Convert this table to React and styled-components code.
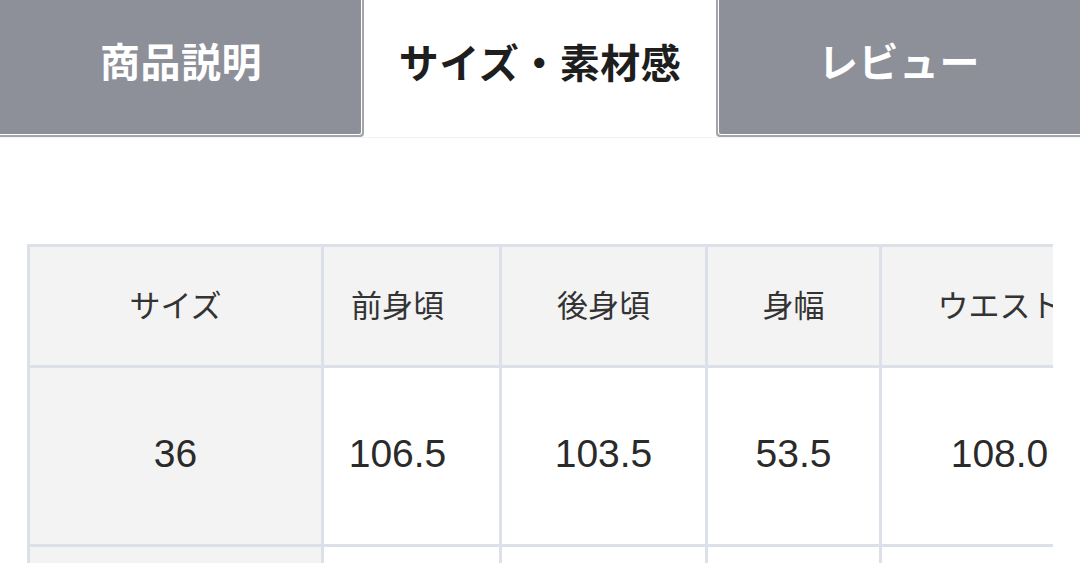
import React from "react";
import styled, { createGlobalStyle } from "styled-components";

const Global = createGlobalStyle`
  html, body { margin: 0; padding: 0; background: #ffffff; }
  body {
    font-family: "Liberation Sans", "Noto Sans CJK JP", sans-serif;
    color: #222;
    overflow: hidden;
  }
`;

const Page = styled.div`
  width: 1080px;
  height: 563px;
  overflow: hidden;
  background: #fff;
`;

const TabBar = styled.nav`
  display: grid;
  grid-template-columns: 364px 1fr 364px;
  height: 137px;
  border-bottom: 1px solid #f3f3f3;
  box-sizing: content-box;
`;

const Tab = styled.div`
  display: flex;
  align-items: center;
  justify-content: center;
  box-sizing: border-box;
  padding-bottom: 16px;
  font-family: "Noto Sans CJK JP", sans-serif;
  font-weight: 700;
  font-size: 40px;
  letter-spacing: 0.5px;
  color: ${(p) => (p.$active ? "#1e1e1e" : "#ffffff")};
  background: ${(p) => (p.$active ? "#ffffff" : "#8e9099")};
  border-bottom: ${(p) => (p.$active ? "none" : "2px solid #a3a5ab")};
  border-right: ${(p) => (p.$side === "left" ? "2px solid #a3a5ab" : "none")};
  border-left: ${(p) => (p.$side === "right" ? "2px solid #a3a5ab" : "none")};
  border-bottom-right-radius: ${(p) => (p.$side === "left" ? "4px" : "0")};
  border-bottom-left-radius: ${(p) => (p.$side === "right" ? "4px" : "0")};
  box-shadow: ${(p) =>
    p.$side === "left"
      ? "inset -1px -1px 0 #ffffff"
      : p.$side === "right"
      ? "inset 1px -1px 0 #ffffff"
      : "none"};
`;

const TableWrap = styled.div`
  margin: 106px 27px 0;
  overflow: hidden;
`;

const Table = styled.table`
  border-collapse: collapse;
  table-layout: fixed;
  width: 1090px;
  color: #333;
`;

const HeadCell = styled.th`
  height: 113px;
  background: #f3f3f3;
  border: 3px solid #dce1e9;
  font-weight: 400;
  font-size: 31px;
  font-family: "Noto Sans CJK JP", sans-serif;
  text-align: center;
  white-space: nowrap;
  padding: 0 ${(p) => p.$shift || 0}px 5px 0;
  overflow: hidden;
`;

const RowHead = styled.th`
  height: 172px;
  background: #f3f3f3;
  border: 3px solid #dce1e9;
  font-weight: 400;
  font-size: 39px;
  font-family: "Liberation Sans", sans-serif;
  color: #2a2a2a;
  text-align: center;
  padding: 0 0 4px 0;
`;

const Cell = styled.td`
  height: 172px;
  background: #ffffff;
  border: 3px solid #dce1e9;
  font-size: 39px;
  color: #2a2a2a;
  text-align: center;
  white-space: nowrap;
  padding: 0 ${(p) => p.$shift || 0}px 4px 0;
`;

const widths = [294, 178, 206, 174, 238];
const shifts = [0, 28, 0, 0, 0];
const headers = ["サイズ", "前身頃", "後身頃", "身幅", "ウエスト"];
const rows = [
  ["36", "106.5", "103.5", "53.5", "108.0"],
  ["", "", "", "", ""],
];

export default function App() {
  return (
    <Page>
      <Global />
      <TabBar>
        <Tab $side="left">商品説明</Tab>
        <Tab $active>サイズ・素材感</Tab>
        <Tab $side="right">レビュー</Tab>
      </TabBar>
      <TableWrap>
        <Table>
          <colgroup>
            {widths.map((w, i) => (
              <col key={i} style={{ width: w }} />
            ))}
          </colgroup>
          <thead>
            <tr>
              {headers.map((h, i) => (
                <HeadCell key={h} $shift={shifts[i]}>
                  {h}
                </HeadCell>
              ))}
            </tr>
          </thead>
          <tbody>
            {rows.map((r, ri) => (
              <tr key={ri}>
                <RowHead>{r[0]}</RowHead>
                {r.slice(1).map((v, i) => (
                  <Cell key={i} $shift={shifts[i + 1]}>
                    {v}
                  </Cell>
                ))}
              </tr>
            ))}
          </tbody>
        </Table>
      </TableWrap>
    </Page>
  );
}
